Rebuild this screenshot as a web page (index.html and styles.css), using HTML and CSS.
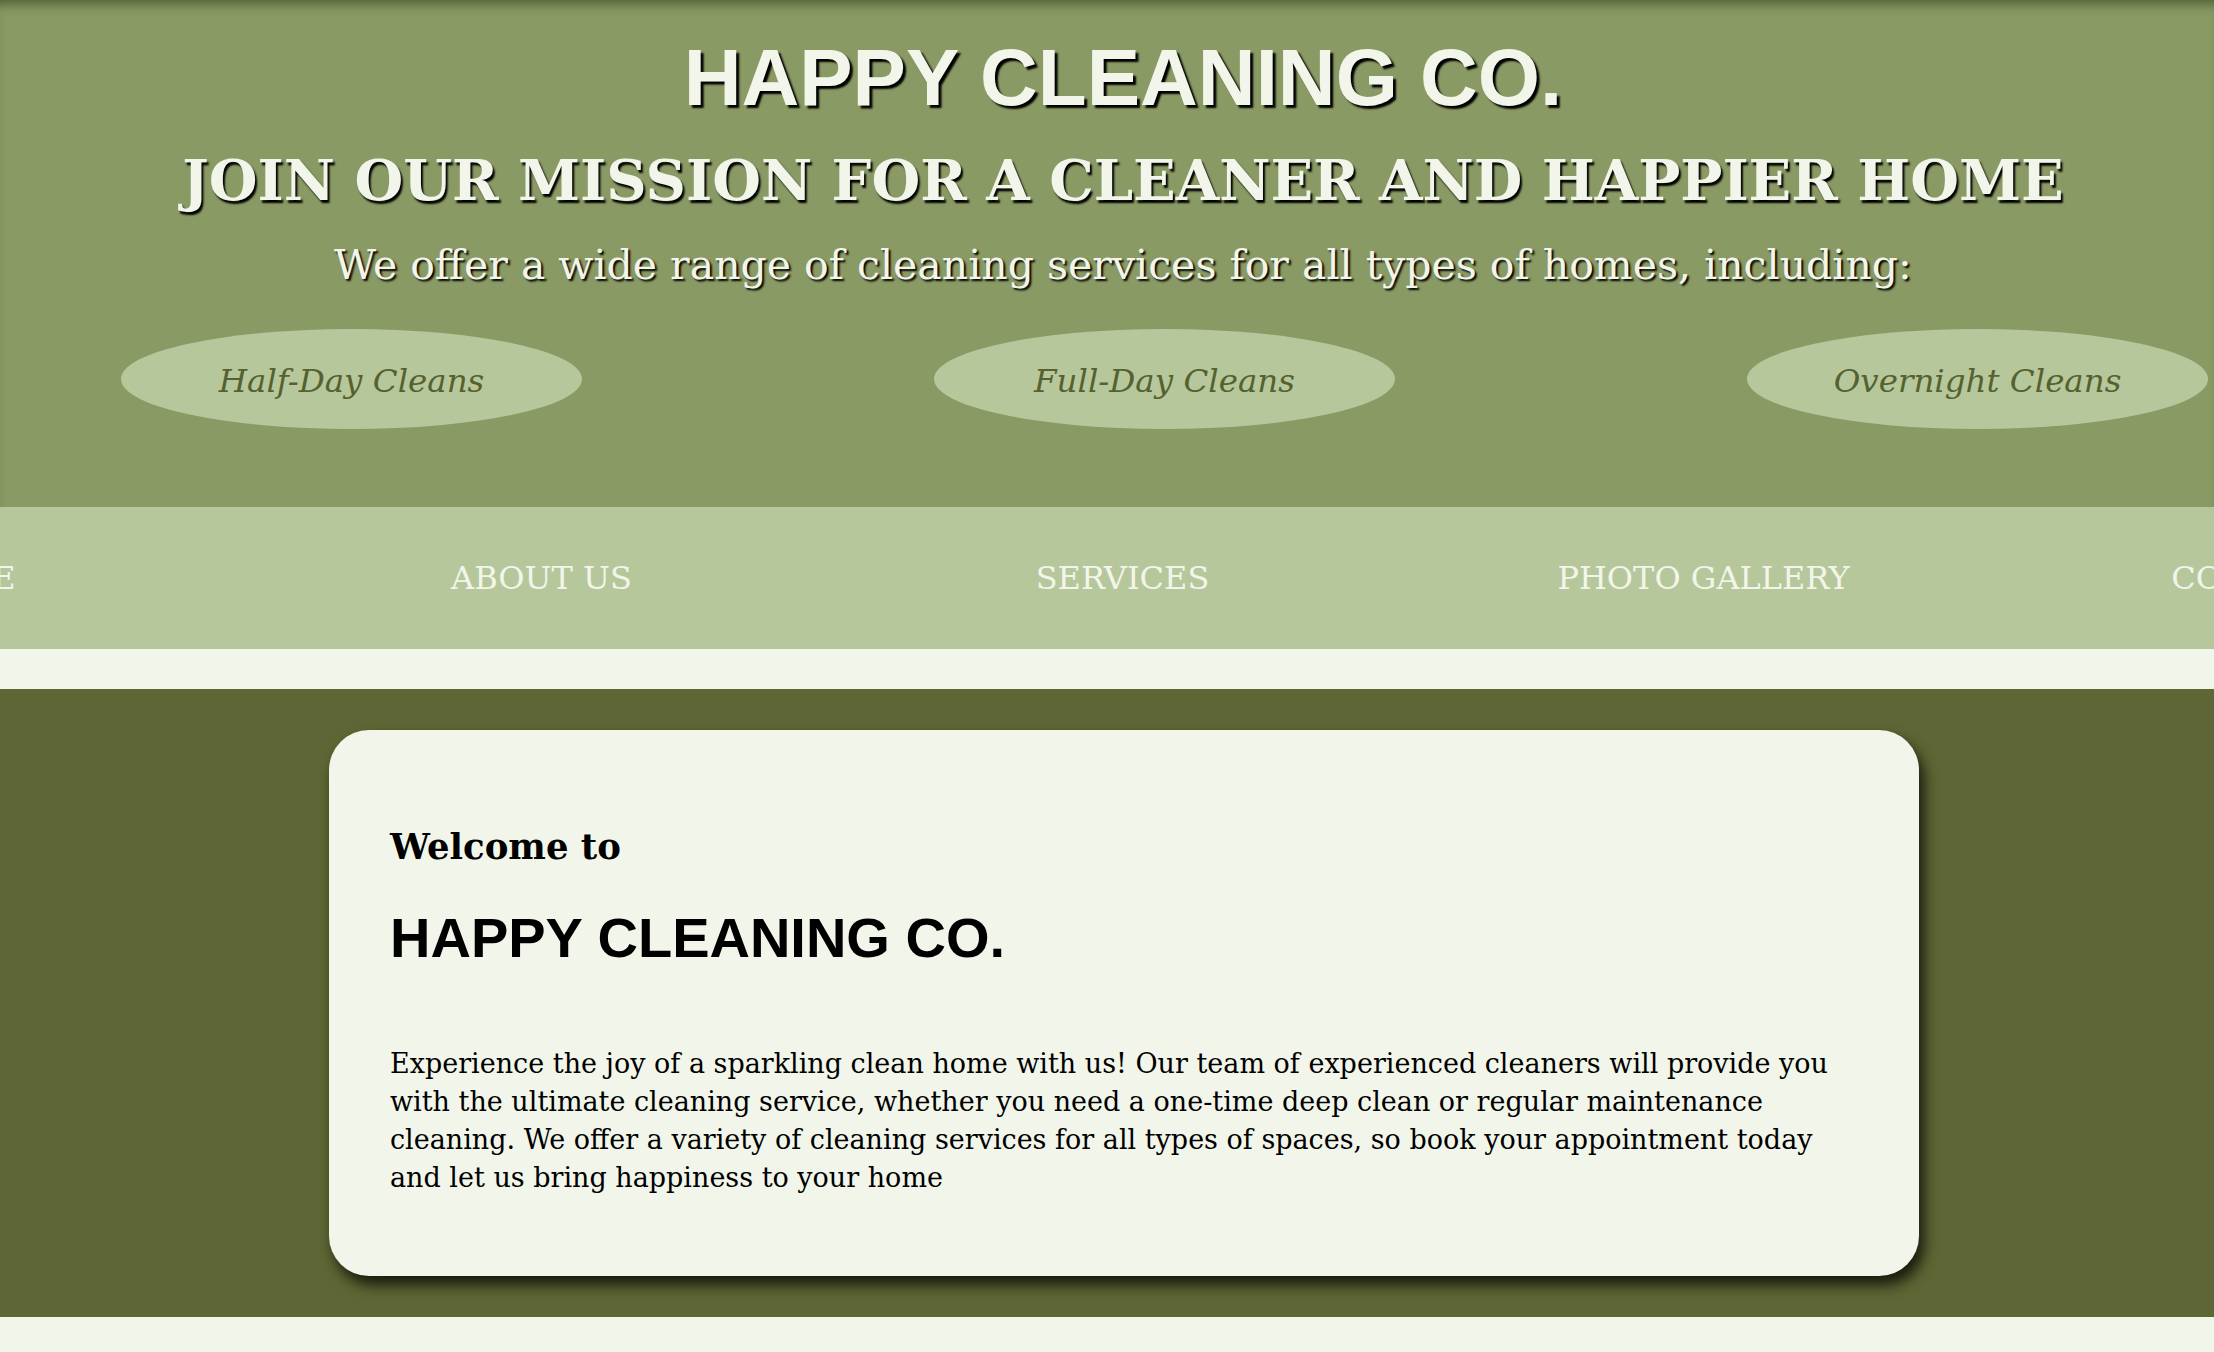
FILE: index.html
```html
<!DOCTYPE html>
<html lang="en">
<head>
<meta charset="utf-8">
<title>Happy Cleaning Co.</title>
<link rel="stylesheet" href="styles.css">
</head>
<body>
<header class="hero">
  <h1 class="brand">HAPPY CLEANING CO.</h1>
  <h2 class="mission">JOIN OUR MISSION FOR A CLEANER AND HAPPIER HOME</h2>
  <p class="offer">We offer a wide range of cleaning services for all types of homes, including:</p>
  <ul class="services">
    <li class="pill">Half-Day Cleans</li>
    <li class="pill">Full-Day Cleans</li>
    <li class="pill">Overnight Cleans</li>
  </ul>
</header>
<nav class="mainnav">
  <ul class="navlist">
    <li class="navitem"><a href="#">HOME</a></li>
    <li class="navitem"><a href="#">ABOUT US</a></li>
    <li class="navitem"><a href="#">SERVICES</a></li>
    <li class="navitem"><a href="#">PHOTO GALLERY</a></li>
    <li class="navitem"><a href="#">CONTACT US</a></li>
  </ul>
</nav>
<div class="gap-band"></div>
<section class="intro">
  <div class="card">
    <h3 class="welcome">Welcome to</h3>
    <h2 class="card-brand">HAPPY CLEANING CO.</h2>
    <p class="card-text">Experience the joy of a sparkling clean home with us! Our team of experienced cleaners will provide you with the ultimate cleaning service, whether you need a one-time deep clean or regular maintenance cleaning. We offer a variety of cleaning services for all types of spaces, so book your appointment today and let us bring happiness to your home</p>
  </div>
</section>
</body>
</html>
```

FILE: styles.css
```css
html, body {
  margin: 0;
  padding: 0;
}
body {
  background: #f2f5e9;
  font-family: "DejaVu Serif", Georgia, serif;
  overflow: hidden;
}

.hero {
  background: #8a9a64;
  box-shadow: inset 0 12px 12px -8px rgba(40, 50, 20, 0.6);
  padding: 38px 0 78px 32px;
  text-align: center;
  color: #f2f5e9;
}
.brand {
  margin: 0;
  font-family: "Liberation Sans", Arial, Helvetica, sans-serif;
  font-weight: bold;
  font-size: 80px;
  line-height: 80px;
  text-shadow: 3px 3px 2px #000;
}
.mission {
  margin: 30px 0 0;
  font-family: "DejaVu Serif", Georgia, serif;
  font-weight: bold;
  font-size: 56px;
  line-height: 64px;
  text-shadow: 2px 3px 2px #000;
}
.offer {
  margin: 27px 0 0;
  font-size: 41px;
  line-height: 52px;
  text-shadow: 2px 2px 2px #000;
}
.services {
  list-style: none;
  margin: 38px 0 0;
  padding: 0 0 0 89px;
  display: flex;
  gap: 352px;
}
.pill {
  flex: 0 0 461px;
  height: 100px;
  border-radius: 50%;
  background: #b7c79c;
  color: #55622f;
  font-style: italic;
  font-size: 32.5px;
  padding-top: 3px;
  box-sizing: border-box;
  display: flex;
  align-items: center;
  justify-content: center;
}

.mainnav {
  background: #b7c79c;
  height: 142px;
  overflow: hidden;
}
.navlist {
  list-style: none;
  margin: 0 0 0 -330px;
  padding: 0;
  display: flex;
  height: 100%;
}
.navitem {
  flex: 0 0 581px;
  display: flex;
  align-items: center;
  justify-content: center;
}
.navitem a {
  color: #f2f5e9;
  text-decoration: none;
  font-size: 32px;
  white-space: nowrap;
}

.gap-band {
  height: 40px;
}

.intro {
  background: #5d6634;
  padding: 41px 0;
}
.card {
  box-sizing: border-box;
  margin-left: 329px;
  width: 1590px;
  height: 546px;
  padding: 97px 61px 0;
  background: #f2f5e9;
  border-radius: 40px;
  box-shadow: 5px 9px 14px rgba(0, 0, 0, 0.75);
  color: #000;
}
.welcome {
  margin: 0;
  font-weight: bold;
  font-size: 35.5px;
  line-height: 40px;
}
.card-brand {
  margin: 43px 0 0;
  font-family: "Liberation Sans", Arial, Helvetica, sans-serif;
  font-weight: bold;
  font-size: 56px;
  line-height: 56px;
}
.card-text {
  margin: 79px 0 0;
  font-size: 27px;
  line-height: 38px;
}
```
